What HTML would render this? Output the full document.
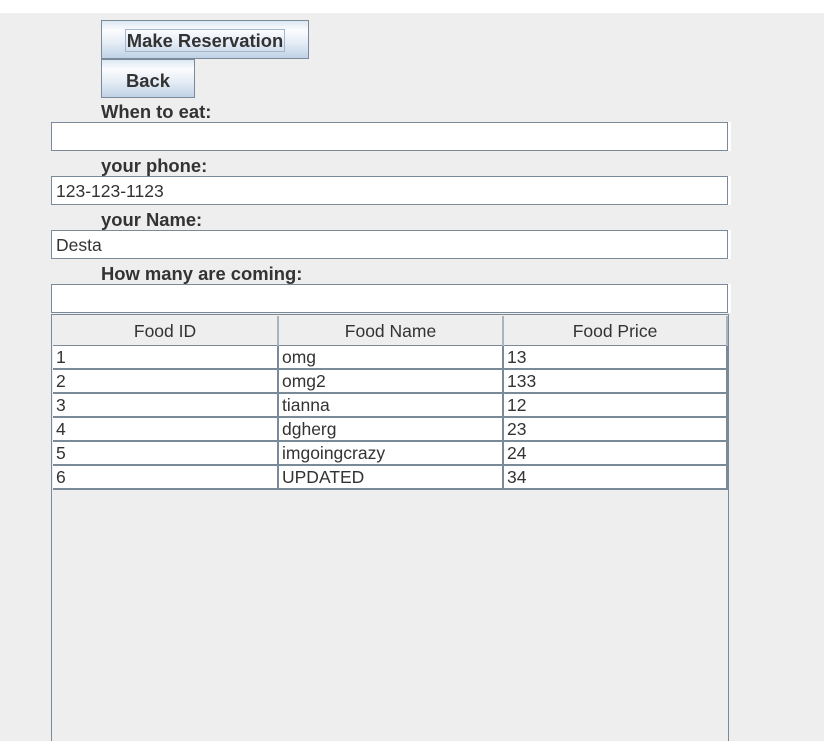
<!DOCTYPE html>
<html><head><style>
*{margin:0;padding:0;box-sizing:border-box}
body{width:824px;height:741px;background:#eeeeee;position:relative;overflow:hidden;font-family:"Liberation Sans",Arial,sans-serif;color:#333}
.abs{position:absolute}
.top{left:0;top:0;width:824px;height:13px;background:#fff}
.btn{border:1px solid #7a8a99;background:linear-gradient(#dde8f3,#fbfcfe 25%,#e4ecf5 60%,#bfd2e6);font-weight:bold;font-size:18.4px;text-align:center;color:#333}
.lbl{font-weight:bold;font-size:18.4px;left:101px}
.fld{left:51px;width:678px;height:29px;background:#fff;border:1px solid #7a8a99;border-right:2px solid #7a8a99;font-size:17.5px;padding-left:4px;line-height:29px}
.fldw{left:728px;width:3px;height:29px;background:#fff}
.tbl{left:51px;top:314px;width:678px;height:427px;border:1px solid #7a8a99;border-bottom:none}
table{border-collapse:collapse;position:absolute;left:1px;top:1px;width:675px;font-size:17.5px}
th{height:29px;background:#eeeeee;font-weight:normal;border:1px solid #7a8a99;border-top:none;border-left:none;border-right:2px solid #aab4be;line-height:26px;padding:2px 0 0 0}
td{height:24px;background:#fff;border:2px solid #7a8a99;border-top:none;padding:0 0 0 3px;line-height:22px}
td:first-child{border-left:none}
</style></head><body>
<div class="abs top"></div>
<div class="abs btn" style="left:101px;top:20px;width:208px;height:39px;line-height:39px"><span style="border:1px solid #a3b6cb;padding:0 1px">Make Reservation</span></div>
<div class="abs btn" style="left:101px;top:59px;width:94px;height:39px;line-height:42px">Back</div>
<div class="abs lbl" style="top:101px">When to eat:</div>
<div class="abs fld" style="top:122px"></div><div class="abs fldw" style="top:122px"></div>
<div class="abs lbl" style="top:155px">your phone:</div>
<div class="abs fld" style="top:176px">123-123-1123</div><div class="abs fldw" style="top:176px"></div>
<div class="abs lbl" style="top:209px">your Name:</div>
<div class="abs fld" style="top:230px">Desta</div><div class="abs fldw" style="top:230px"></div>
<div class="abs lbl" style="top:263px">How many are coming:</div>
<div class="abs fld" style="top:284px"></div><div class="abs fldw" style="top:284px"></div>
<div class="abs tbl">
<table>
<tr><th style="width:225px">Food ID</th><th style="width:225px">Food Name</th><th>Food Price</th></tr>
<tr><td>1</td><td>omg</td><td>13</td></tr>
<tr><td>2</td><td>omg2</td><td>133</td></tr>
<tr><td>3</td><td>tianna</td><td>12</td></tr>
<tr><td>4</td><td>dgherg</td><td>23</td></tr>
<tr><td>5</td><td>imgoingcrazy</td><td>24</td></tr>
<tr><td>6</td><td>UPDATED</td><td>34</td></tr>
</table>
</div>
</body></html>
